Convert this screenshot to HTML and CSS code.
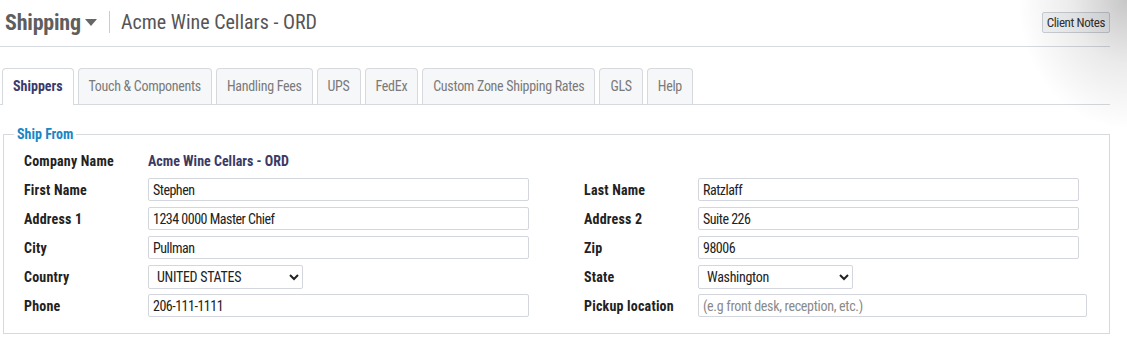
FILE: index.html
```html
<!DOCTYPE html>
<html lang="en">
<head>
  <meta charset="UTF-8">
  <title>Shipping - Acme Wine Cellars - ORD</title>
  <link rel="stylesheet" href="styles.css">
</head>
<body>
  <div class="page">
    <!-- Page header -->
    <header class="page-head">
      <h1 class="section-name">Shipping <span class="caret"></span></h1>
      <span class="divider"></span>
      <h2 class="client-name">Acme Wine Cellars - ORD</h2>
      <button class="btn-notes">Client Notes</button>
    </header>

    <!-- Tabs -->
    <ul class="tabs">
      <li class="tab active">Shippers</li>
      <li class="tab">Touch &amp; Components</li>
      <li class="tab">Handling Fees</li>
      <li class="tab">UPS</li>
      <li class="tab">FedEx</li>
      <li class="tab">Custom Zone Shipping Rates</li>
      <li class="tab">GLS</li>
      <li class="tab">Help</li>
    </ul>

    <!-- Ship From form -->
    <fieldset class="ship-from">
      <legend>Ship From</legend>
      <div class="form-grid">
        <label>Company Name</label>
        <span class="value">Acme Wine Cellars - ORD</span>
        <span></span>
        <span></span>

        <label>First Name</label>
        <div><input class="text" type="text" value="Stephen"></div>
        <label>Last Name</label>
        <div><input class="text" type="text" value="Ratzlaff"></div>

        <label>Address 1</label>
        <div><input class="text" type="text" value="1234 0000 Master Chief"></div>
        <label>Address 2</label>
        <div><input class="text" type="text" value="Suite 226"></div>

        <label>City</label>
        <div><input class="text" type="text" value="Pullman"></div>
        <label>Zip</label>
        <div><input class="text" type="text" value="98006"></div>

        <label>Country</label>
        <div>
          <select class="pick">
            <option>UNITED STATES</option>
          </select>
        </div>
        <label>State</label>
        <div>
          <select class="pick">
            <option>Washington</option>
          </select>
        </div>

        <label>Phone</label>
        <div><input class="text" type="text" value="206-111-1111"></div>
        <label>Pickup location</label>
        <div><input class="text wide" type="text" placeholder="(e.g front desk, reception, etc.)"></div>
      </div>
    </fieldset>
  </div>

  <!-- corner shade, top right -->
  <div class="corner-shade"></div>
</body>
</html>
```

FILE: styles.css
```css
/* Global */
* { box-sizing: border-box; }
body {
  margin: 0;
  background: #fff;
  font-family: "Roboto Condensed", "DejaVu Sans Condensed", Roboto, sans-serif;
  font-stretch: condensed;
  color: #222;
  overflow: hidden;
}
.page {
  padding-right: 17px;
}

/* ---------- Header ---------- */
.page-head {
  display: flex;
  align-items: center;
  height: 47px;
  padding: 0 0 2px 5px;
  border-bottom: 1px solid #d6d9de;
}
.section-name {
  margin: 0;
  font-size: 22px;
  font-weight: 700;
  color: #5e5e5e;
  letter-spacing: -0.2px;
  display: flex;
  align-items: center;
}
.caret {
  display: inline-block;
  margin-left: 4px;
  border-left: 6px solid transparent;
  border-right: 6px solid transparent;
  border-top: 7px solid #666;
}
.divider {
  width: 1px;
  height: 22px;
  background: #ccc;
  margin: 0 11px 0 12px;
}
.client-name {
  margin: 0;
  font-size: 20px;
  font-weight: 400;
  color: #555;
}
.btn-notes {
  margin-left: auto;
  font-family: inherit;
  font-size: 13px;
  letter-spacing: -0.4px;
  color: #333;
  background: #f4f5f7;
  border: 1px solid #cdd1d6;
  border-radius: 2px;
  padding: 2px 4px;
  height: 21px;
}

/* ---------- Tabs ---------- */
.tabs {
  list-style: none;
  margin: 21px 0 0;
  padding: 0 0 0 2px;
  display: flex;
  gap: 4px;
  border-bottom: 1px solid #d6d9de;
}
.tab {
  height: 36px;
  line-height: 34px;
  padding: 0 10px;
  font-size: 14px;
  letter-spacing: -0.3px;
  color: #7a7a7a;
  background: #f6f7f9;
  border: 1px solid #d6d9de;
  border-bottom: none;
  border-radius: 4px 4px 0 0;
}
.tab.active {
  background: #fff;
  color: #3b3a6b;
  font-weight: 700;
  letter-spacing: 0;
  margin-bottom: -1px;
  height: 37px;
}

/* ---------- Ship From ---------- */
.ship-from {
  margin: 21px 0 0 3px;
  padding: 7px 20px 16px;
  border: 1px solid #d6d9de;
  min-width: 0;
}
.ship-from legend {
  margin-left: -10px;
  padding: 0 3px;
  font-size: 14px;
  font-weight: 700;
  color: #1a86c4;
}
.form-grid {
  display: grid;
  grid-template-columns: 124px 436px 114px 1fr;
  grid-auto-rows: 23px;
  row-gap: 6px;
  align-items: center;
}
.form-grid label {
  font-size: 14px;
  font-weight: 700;
  letter-spacing: 0.2px;
  color: #222;
}
.form-grid > div {
  display: flex;
  align-items: center;
}
.value {
  font-size: 14px;
  font-weight: 700;
  color: #3b3a64;
}
.text {
  width: 381px;
  height: 23px;
  padding: 0 4px;
  font-family: inherit;
  font-stretch: condensed;
  font-size: 14px;
  letter-spacing: -0.5px;
  color: #222;
  border: 1px solid #d3d6dc;
  border-radius: 2px;
  background: #fff;
}
.text.wide { width: 389px; letter-spacing: -0.3px; }
.text::placeholder { color: #8a8a8a; }
.pick {
  width: 155px;
  height: 24px;
  padding: 0 4px;
  font-family: inherit;
  font-stretch: condensed;
  font-size: 14px;
  letter-spacing: -0.3px;
  color: #222;
  border: 1px solid #d3d6dc;
  border-radius: 2px;
  background: #fff;
}

/* ---------- Corner shade ---------- */
.corner-shade {
  position: fixed;
  top: 0;
  right: 0;
  width: 110px;
  height: 130px;
  pointer-events: none;
  background: radial-gradient(ellipse at 100% 0%, rgba(0,0,0,0.22) 0%, rgba(0,0,0,0.08) 35%, rgba(0,0,0,0) 70%);
}
```
